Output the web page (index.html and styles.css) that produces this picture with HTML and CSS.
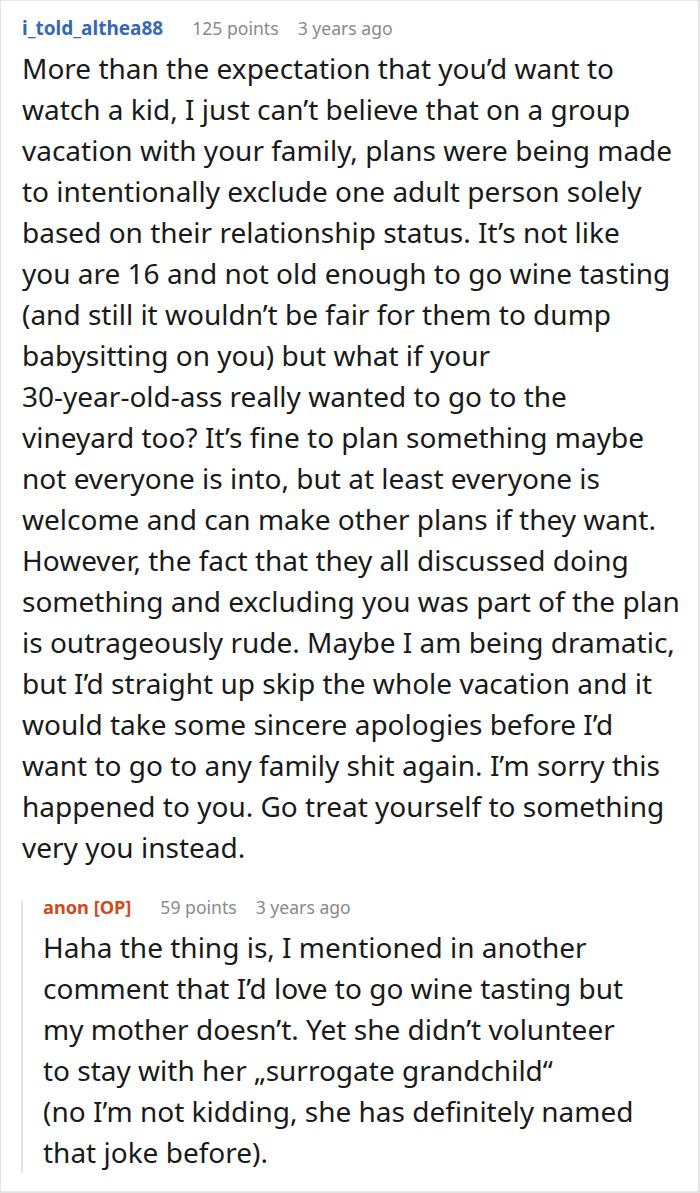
FILE: index.html
```html
<!DOCTYPE html>
<html>
<head>
<meta charset="utf-8">
<link rel="stylesheet" href="styles.css">
</head>
<body>
<div class="frame">
  <div class="comment">
    <div class="meta">
      <span class="author">i_told_althea88</span>
      <span class="info">125 points</span>
      <span class="info">3 years ago</span>
    </div>
    <p class="body">More than the expectation that you’d want to<br>watch a kid, I just can’t believe that on a group<br>vacation with your family, plans were being made<br>to intentionally exclude one adult person solely<br>based on their relationship status. It’s not like<br>you are 16 and not old enough to go wine tasting<br>(and still it wouldn’t be fair for them to dump<br>babysitting on you) but what if your<br>30-year-old-ass really wanted to go to the<br>vineyard too? It’s fine to plan something maybe<br>not everyone is into, but at least everyone is<br>welcome and can make other plans if they want.<br>However, the fact that they all discussed doing<br>something and excluding you was part of the plan<br>is outrageously rude. Maybe I am being dramatic,<br>but I’d straight up skip the whole vacation and it<br>would take some sincere apologies before I’d<br>want to go to any family shit again. I’m sorry this<br>happened to you. Go treat yourself to something<br>very you instead.</p>
    <div class="reply">
      <div class="meta">
        <span class="author op">anon [OP]</span>
        <span class="info">59 points</span>
        <span class="info">3 years ago</span>
      </div>
      <p class="body">Haha the thing is, I mentioned in another<br>comment that I’d love to go wine tasting but<br>my mother doesn’t. Yet she didn’t volunteer<br>to stay with her „surrogate grandchild“<br>(no I’m not kidding, she has definitely named<br>that joke before).</p>
    </div>
  </div>
</div>
</body>
</html>
```
FILE: styles.css
```css
html, body {
  margin: 0;
  padding: 0;
  background: #fff;
}
.frame {
  width: 700px;
  height: 1193px;
  box-sizing: border-box;
  border: 2px solid #e4e4e4;
  border-left-width: 1px;
  border-top-width: 1px;
  padding: 11px 0 0 21px;
  font-family: "Noto Sans", "Open Sans", sans-serif;
  color: #1a1a1a;
}
.meta {
  display: flex;
  gap: 19px;
  align-items: baseline;
  font-size: 17.6px;
  line-height: 32px;
}
.author {
  font-weight: 700;
  font-size: 19px;
  color: #3469b4;
  margin-right: 10px;
}
.author.op {
  font-size: 18.2px;
  color: #d24a1b;
}
.info {
  color: #8a8a8a;
}
.body {
  margin: 4px 0 0;
  font-size: 28px;
  line-height: 41px;
}
.reply {
  position: relative;
  margin-top: 23px;
  padding-left: 21px;
}
.reply::before {
  content: "";
  position: absolute;
  left: -1px;
  top: 9px;
  bottom: 0;
  width: 2px;
  background: #e6e6e6;
}
```
